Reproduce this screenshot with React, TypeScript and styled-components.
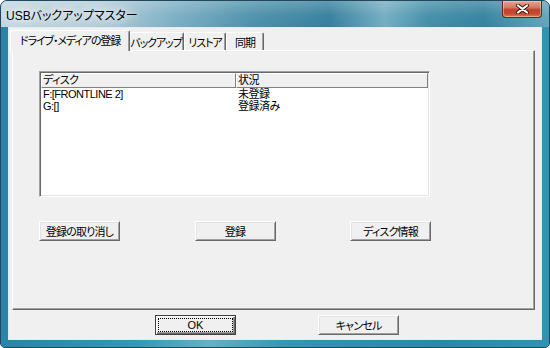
import React from "react";
import styled, { createGlobalStyle } from "styled-components";

const FONT = `"Liberation Sans", "Noto Sans CJK JP", sans-serif`;

const Global = createGlobalStyle`
  html, body { margin: 0; padding: 0; background: #ffffff; }
  body {
    width: 550px;
    height: 348px;
    overflow: hidden;
    font-family: ${FONT};
    font-feature-settings: "palt";
  }
  * { box-sizing: border-box; }
`;

const Window = styled.div`
  width: 550px;
  height: 348px;
  display: flex;
  flex-direction: column;
  border: 1px solid #22465a;
  border-radius: 7px 7px 5px 5px;
  overflow: hidden;
  background: #3a95b3;
`;

const TitleBar = styled.div`
  height: 26px;
  display: flex;
  align-items: center;
  padding: 0 7px 0 5px;
  background:
    linear-gradient(180deg, rgba(255, 255, 255, 0.22) 0%, rgba(255, 255, 255, 0.04) 55%, rgba(255, 255, 255, 0) 100%),
    linear-gradient(90deg, #c2d6df 0%, #b2ccd8 18%, #7aaec3 32%, #4d90ab 46%, #357f9e 60%, #73adc2 70%, #438ea9 78%, #33829f 88%, #64a5bd 100%);
`;

const Title = styled.span`
  font-size: 12px;
  color: #000;
  text-shadow: 0 0 6px #ffffff, 0 0 10px rgba(255, 255, 255, 0.9), 0 0 14px rgba(255, 255, 255, 0.7);
`;

const CloseButton = styled.div`
  margin-left: auto;
  align-self: flex-start;
  width: 40px;
  height: 17px;
  display: flex;
  align-items: center;
  justify-content: center;
  border: 1px solid #5e2a22;
  border-top: none;
  border-radius: 0 0 4px 4px;
  background: linear-gradient(180deg, #e7a395 0%, #d67a65 40%, #c1412a 55%, #c84a30 80%, #e07a55 100%);
  box-shadow: inset 0 0 0 1px rgba(255, 220, 210, 0.45);
`;

const FrameBody = styled.div`
  flex: 1;
  display: flex;
  padding: 0 7px 7px 7px;
  background: linear-gradient(90deg, #2a83a8 0%, #3399b5 25%, #62b2c6 38%, #3596b2 52%, #2a88aa 80%, #3193b2 100%);
`;

const Client = styled.div`
  flex: 1;
  display: flex;
  flex-direction: column;
  background: #f0f0f0;
  border: 1px solid #e2edf1;
`;

const TabStrip = styled.div`
  height: 22px;
  display: flex;
  align-items: flex-end;
  padding-left: 3px;
`;

const Tab = styled.div<{ $w: number; $active?: boolean }>`
  position: relative;
  z-index: ${(p) => (p.$active ? 1 : 0)};
  width: ${(p) => p.$w + (p.$active ? 4 : 0)}px;
  height: ${(p) => (p.$active ? 21 : 18)}px;
  margin: 0 ${(p) => (p.$active ? -2 : 0)}px ${(p) => (p.$active ? -1 : 0)}px;
  display: flex;
  align-items: center;
  justify-content: center;
  padding-bottom: ${(p) => (p.$active ? 2 : 0)}px;
  font-size: 11px;
  letter-spacing: -1.1px;
  color: #000;
  background: #f0f0f0;
  border-top: 1px solid #ffffff;
  border-left: 1px solid #ffffff;
  border-right: 1px solid #696969;
  border-radius: 2px 2px 0 0;
  box-shadow: inset -1px 0 0 #a0a0a0;
  white-space: nowrap;
`;

const Panel = styled.div`
  height: 260px;
  margin: 0 6px 0 3px;
  border-top: 1px solid #ffffff;
  border-left: 1px solid #ffffff;
  border-right: 1px solid #696969;
  border-bottom: 1px solid #696969;
  box-shadow: inset -1px -1px 0 #a0a0a0;
  padding: 20px 0 0 26px;
  display: flex;
  flex-direction: column;
`;

const ListBox = styled.div`
  width: 391px;
  height: 126px;
  background: #ffffff;
  border-top: 1px solid #a0a0a0;
  border-left: 1px solid #a0a0a0;
  border-right: 1px solid #ffffff;
  border-bottom: 1px solid #ffffff;
  box-shadow: inset 1px 1px 0 #696969, inset -1px -1px 0 #e3e3e3;
  padding: 1px 0 0 1px;
  display: flex;
  flex-direction: column;
`;

const HeaderRow = styled.div`
  display: flex;
  height: 15px;
  margin-right: 1px;
`;

const HeaderCell = styled.div<{ $w?: number }>`
  ${(p) => (p.$w ? `width: ${p.$w}px;` : "flex: 1;")}
  height: 15px;
  background: #f0f0f0;
  border-top: 1px solid #ffffff;
  border-left: 1px solid #ffffff;
  border-right: 1px solid #808080;
  border-bottom: 1px solid #808080;
  font-size: 11px;
  letter-spacing: -0.6px;
  line-height: 12px;
  padding-left: 1px;
  color: #000;
  white-space: nowrap;
`;

const Row = styled.div`
  display: flex;
  height: 12px;
  font-size: 11px;
  letter-spacing: -0.5px;
  line-height: 12px;
  color: #000;
`;

const Cell = styled.div<{ $w?: number }>`
  ${(p) => (p.$w ? `width: ${p.$w}px;` : "flex: 1;")}
  padding-left: 2px;
  white-space: nowrap;
`;

const ButtonRow = styled.div`
  width: 392px;
  margin-top: 24px;
  display: flex;
  justify-content: space-between;
`;

const Button = styled.div<{ $default?: boolean }>`
  width: 81px;
  height: 20px;
  display: flex;
  align-items: center;
  justify-content: center;
  font-size: 11px;
  letter-spacing: -0.8px;
  color: #000;
  background: #f0f0f0;
  border-top: 1px solid ${(p) => (p.$default ? "#404040" : "#ffffff")};
  border-left: 1px solid ${(p) => (p.$default ? "#404040" : "#ffffff")};
  border-right: 1px solid ${(p) => (p.$default ? "#404040" : "#696969")};
  border-bottom: 1px solid ${(p) => (p.$default ? "#404040" : "#696969")};
  box-shadow: ${(p) =>
    p.$default
      ? "inset 1px 1px 0 #ffffff, inset -1px -1px 0 #696969, inset -2px -2px 0 #a0a0a0"
      : "inset 1px 1px 0 #e3e3e3, inset -1px -1px 0 #a0a0a0"};
  white-space: nowrap;
`;

const FocusRing = styled.div`
  width: 75px;
  height: 14px;
  display: flex;
  align-items: center;
  justify-content: center;
  border: 1px dotted #000;
  letter-spacing: 0;
`;

const Footer = styled.div`
  flex: 1;
  display: flex;
  align-items: center;
  justify-content: center;
  gap: 82px;
  padding-left: 4px;
`;

const CloseGlyph = () => (
  <svg width="13" height="10" viewBox="0 0 13 10">
    <path d="M2 1.5 L11 8.5 M11 1.5 L2 8.5" stroke="#3a1a14" strokeWidth="4" strokeLinecap="round" />
    <path d="M2 1.5 L11 8.5 M11 1.5 L2 8.5" stroke="#ffffff" strokeWidth="2.2" strokeLinecap="round" />
  </svg>
);

export default function App() {
  return (
    <>
      <Global />
      <Window>
        <TitleBar>
          <Title>USBバックアップマスター</Title>
          <CloseButton>
            <CloseGlyph />
          </CloseButton>
        </TitleBar>
        <FrameBody>
          <Client>
            <TabStrip>
              <Tab $w={116} $active>ドライブ・メディアの登録</Tab>
              <Tab $w={56}>バックアップ</Tab>
              <Tab $w={42}>リストア</Tab>
              <Tab $w={38}>同期</Tab>
            </TabStrip>
            <Panel>
              <ListBox>
                <HeaderRow>
                  <HeaderCell $w={195}>ディスク</HeaderCell>
                  <HeaderCell>状況</HeaderCell>
                </HeaderRow>
                <Row>
                  <Cell $w={195}>F:[FRONTLINE 2]</Cell>
                  <Cell>未登録</Cell>
                </Row>
                <Row>
                  <Cell $w={195}>G:[]</Cell>
                  <Cell>登録済み</Cell>
                </Row>
              </ListBox>
              <ButtonRow>
                <Button>登録の取り消し</Button>
                <Button>登録</Button>
                <Button>ディスク情報</Button>
              </ButtonRow>
            </Panel>
            <Footer>
              <Button $default>
                <FocusRing>OK</FocusRing>
              </Button>
              <Button>キャンセル</Button>
            </Footer>
          </Client>
        </FrameBody>
      </Window>
    </>
  );
}
